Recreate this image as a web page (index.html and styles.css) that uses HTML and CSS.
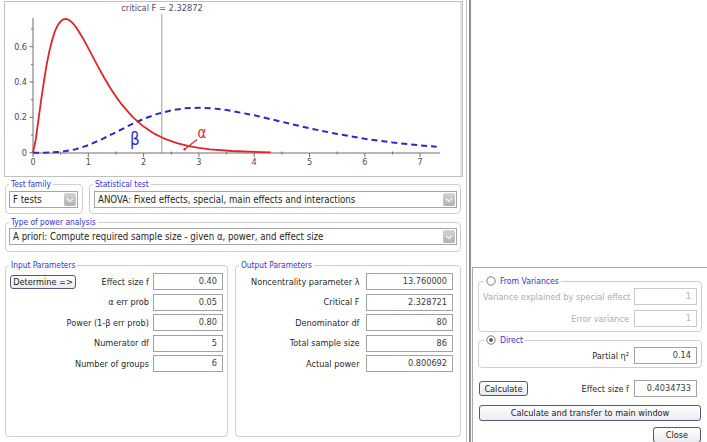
FILE: index.html
```html
<!DOCTYPE html>
<html lang="en">
<head>
    <meta charset="UTF-8">
    <title>G*Power - ANOVA</title>
    <link rel="stylesheet" href="styles.css">
</head>
<body>
<div class="screen">
    <div class="main">
        <div class="chart">
            <svg class="plot" width="457" height="174" viewBox="5 2 457 174">
                <text class="crit-label" x="162" y="11">critical F = 2.32872</text>
                <line class="crit-line" x1="161.8" y1="14" x2="161.8" y2="153"/>
                <path class="axis" d="M33 18V153H440"/>
                <path class="axis" d="M33 153v4M88.3 153v4M143.6 153v4M198.9 153v4M254.2 153v4M309.5 153v4M364.8 153v4M420.1 153v4
                    M60.7 151.5v3M116 151.5v3M171.3 151.5v3M226.6 151.5v3M281.9 151.5v3M337.2 151.5v3M392.5 151.5v3
                    M29.5 152.7h3.5M29.5 117.4h3.5M29.5 82h3.5M29.5 46.7h3.5M31 135h2M31 99.7h2M31 64.4h2M31 29h2"/>
                <g class="tick-x">
                    <text x="33" y="165">0</text>
                    <text x="88.3" y="165">1</text>
                    <text x="143.6" y="165">2</text>
                    <text x="198.9" y="165">3</text>
                    <text x="254.2" y="165">4</text>
                    <text x="309.5" y="165">5</text>
                    <text x="364.8" y="165">6</text>
                    <text x="420.1" y="165">7</text>
                </g>
                <g class="tick-y">
                    <text x="27" y="155.7">0</text>
                    <text x="27" y="120.4">0.2</text>
                    <text x="27" y="85">0.4</text>
                    <text x="27" y="49.7">0.6</text>
                </g>
                <polyline class="curve-blue" points="33,152.7 46.8,152.6 60.7,151.9 74.5,149.6 88.3,145.2 102.1,139.1 116,132.2 129.8,125.2 143.6,118.9 157.4,113.9 171.3,110.3 185.1,108.3 198.9,107.7 212.7,108.4 226.6,110 254.2,115.3 281.9,121.8 309.5,128.3 337.2,134 364.8,138.8 392.5,142.5 420.1,145.4 436.7,146.8"/>
                <polyline class="curve-red" points="33,152.7 35.8,139.2 38.5,119.3 41.3,99 44.1,80.1 46.8,63.7 49.6,50.1 52.4,39.2 55.1,30.8 57.9,24.9 60.7,21.2 63.4,19.3 66.2,18.9 69,20 71.7,22.1 74.5,25.2 77.2,28.9 82.8,37.9 88.3,48.1 93.8,58.6 99.4,69.1 104.9,79 110.4,88.2 116,96.6 121.5,104.2 132.5,116.9 143.6,126.6 154.7,133.9 165.7,139.2 176.8,143.1 187.8,145.9 198.9,147.9 210,149.3 232.1,151 254.2,151.9 270.8,152.4"/>
                <text class="beta" x="135" y="145">β</text>
                <text class="alpha" x="202" y="138">α</text>
                <line class="pointer" x1="197" y1="139.5" x2="185" y2="149"/>
                <circle class="pointer-dot" cx="184.6" cy="149.3" r="1.2"/>
            </svg>
        </div>

        <div class="test-row">
            <fieldset class="group family">
                <legend>Test family</legend>
                <div class="select">
                    <span class="select-value">F tests</span>
                    <span class="select-arrow"><svg width="8" height="6" viewBox="0 0 8 6"><polyline points="1,1.5 4,4.5 7,1.5"/></svg></span>
                </div>
            </fieldset>
            <fieldset class="group stat">
                <legend>Statistical test</legend>
                <div class="select">
                    <span class="select-value">ANOVA: Fixed effects, special, main effects and interactions</span>
                    <span class="select-arrow"><svg width="8" height="6" viewBox="0 0 8 6"><polyline points="1,1.5 4,4.5 7,1.5"/></svg></span>
                </div>
            </fieldset>
        </div>

        <fieldset class="group power-type">
            <legend>Type of power analysis</legend>
            <div class="select">
                <span class="select-value">A priori: Compute required sample size - given α, power, and effect size</span>
                <span class="select-arrow"><svg width="8" height="6" viewBox="0 0 8 6"><polyline points="1,1.5 4,4.5 7,1.5"/></svg></span>
            </div>
        </fieldset>

        <div class="params">
            <fieldset class="group input-params">
                <legend>Input Parameters</legend>
                <div class="param-list">
                    <div class="param-row">
                        <button class="btn determine">Determine =&gt;</button>
                        <span class="label">Effect size f</span>
                        <span class="field">0.40</span>
                    </div>
                    <div class="param-row">
                        <span class="label">α err prob</span>
                        <span class="field">0.05</span>
                    </div>
                    <div class="param-row">
                        <span class="label">Power (1-β err prob)</span>
                        <span class="field">0.80</span>
                    </div>
                    <div class="param-row">
                        <span class="label">Numerator df</span>
                        <span class="field">5</span>
                    </div>
                    <div class="param-row">
                        <span class="label">Number of groups</span>
                        <span class="field">6</span>
                    </div>
                </div>
            </fieldset>
            <fieldset class="group output-params">
                <legend>Output Parameters</legend>
                <div class="param-list">
                    <div class="param-row">
                        <span class="label">Noncentrality parameter λ</span>
                        <span class="field">13.760000</span>
                    </div>
                    <div class="param-row">
                        <span class="label">Critical F</span>
                        <span class="field">2.328721</span>
                    </div>
                    <div class="param-row">
                        <span class="label">Denominator df</span>
                        <span class="field">80</span>
                    </div>
                    <div class="param-row">
                        <span class="label">Total sample size</span>
                        <span class="field">86</span>
                    </div>
                    <div class="param-row">
                        <span class="label">Actual power</span>
                        <span class="field">0.800692</span>
                    </div>
                </div>
            </fieldset>
        </div>
    </div>

    <div class="side">
        <div class="dialog">
            <fieldset class="group variances">
                <legend>
                    <span class="radio-title">
                        <svg class="radio" width="10" height="10" viewBox="0 0 10 10"><circle cx="5" cy="5" r="4.2"/></svg>
                        From Variances
                    </span>
                </legend>
                <div class="var-rows">
                    <div class="var-row">
                        <span class="label muted">Variance explained by special effect</span>
                        <span class="field disabled">1</span>
                    </div>
                    <div class="var-row">
                        <span class="label muted">Error variance</span>
                        <span class="field disabled">1</span>
                    </div>
                </div>
            </fieldset>
            <fieldset class="group direct">
                <legend>
                    <span class="radio-title">
                        <svg class="radio checked" width="10" height="10" viewBox="0 0 10 10"><circle cx="5" cy="5" r="4.2"/><circle class="dot" cx="5" cy="5" r="2"/></svg>
                        Direct
                    </span>
                </legend>
                <div class="var-row">
                    <span class="label">Partial η²</span>
                    <span class="field">0.14</span>
                </div>
            </fieldset>
            <div class="calc-row">
                <button class="btn">Calculate</button>
                <span class="label">Effect size f</span>
                <span class="field">0.4034733</span>
            </div>
            <button class="btn transfer">Calculate and transfer to main window</button>
            <button class="btn close">Close</button>
        </div>
    </div>
</div>
</body>
</html>
```

FILE: styles.css
```css
* {
    box-sizing: border-box;
}

body {
    margin: 0;
    background-color: #ffffff;
    font-family: "DejaVu Sans Condensed", "DejaVu Sans", sans-serif;
    font-stretch: condensed;
    font-size: 9.1px;
    color: #2a2a2a;
}

.screen {
    display: flex;
    width: 707px;
    height: 442px;
    overflow: hidden;
}

/* main window */
.main {
    display: flex;
    flex-direction: column;
    flex-shrink: 0;
    width: 467px;
    height: 442px;
    padding: 0 5px;
    border-right: 1px solid #c4c4c4;
}

.chart {
    height: 176px;
    margin: 1px -2px 0 -1px;
    border: 1px solid #c2c2c2;
    box-shadow: inset -2px 0 0 #e4e4e4;
}

.plot {
    display: block;
}

.plot text {
    font-family: "DejaVu Sans Condensed", "DejaVu Sans", sans-serif;
    font-stretch: condensed;
}

.crit-label {
    font-size: 9.2px;
    fill: #534a66;
    text-anchor: middle;
}

.crit-line {
    stroke: #9c9c9c;
    stroke-width: 1;
}

.axis {
    fill: none;
    stroke: #6f6f6f;
    stroke-width: 1;
}

.tick-x text,
.tick-y text {
    font-size: 9px;
    fill: #4c4658;
}

.tick-x text {
    text-anchor: middle;
}

.tick-y text {
    text-anchor: end;
}

.curve-red {
    fill: none;
    stroke: #e32424;
    stroke-width: 1.8;
    stroke-linejoin: round;
}

.curve-blue {
    fill: none;
    stroke: #2a2ac6;
    stroke-width: 2;
    stroke-dasharray: 6 4;
}

.beta {
    font-size: 17px;
    fill: #2d2dcc;
    text-anchor: middle;
}

.alpha {
    font-size: 15px;
    fill: #e22a2a;
    text-anchor: middle;
}

.pointer {
    stroke: #e22a2a;
    stroke-width: 1.3;
}

.pointer-dot {
    fill: #e22a2a;
}

/* grouped boxes */
.group {
    margin: 0;
    padding: 0 3px 5px;
    min-width: 0;
    border: 1px solid #cfcfcf;
    border-radius: 4px;
}

.group legend {
    padding: 0 2px;
    font-size: 8.3px;
    line-height: 12px;
    color: #3434d4;
}

.test-row {
    display: flex;
    gap: 6px;
    margin-top: 1px;
}

.family {
    flex-shrink: 0;
    width: 78px;
    padding: 1px 4px 5px 3px;
}

.stat {
    flex: 1;
    padding: 1px 3px 5px 4px;
}

.stat legend {
    margin-left: -1px;
}

.power-type {
    margin-top: 2px;
    padding: 0 3px 6px 3px;
}

.select {
    display: flex;
    align-items: center;
    height: 17px;
    padding: 0 1px 0 3px;
    border: 1px solid #a5a5a5;
    background-color: #ffffff;
}

.select-value {
    flex: 1;
    overflow: hidden;
    white-space: nowrap;
    font-size: 9.6px;
    color: #262626;
}

.select-arrow {
    display: flex;
    align-items: center;
    justify-content: center;
    width: 12px;
    height: 13px;
    border-radius: 2px;
    background: linear-gradient(#d4d4d4, #b2b2b2);
}

.select-arrow polyline {
    fill: none;
    stroke: #eeeeee;
    stroke-width: 1.5;
}

/* parameter boxes */
.params {
    flex: 1;
    display: flex;
    gap: 7px;
    margin: 7px 0 5px;
}

.params .group {
    flex: 1 1 0;
}

.input-params {
    padding: 2px 4px 0 4px;
}

.output-params {
    padding: 2px 7px 0 4px;
}

.params legend {
    margin-left: -1px;
}

.param-list {
    display: flex;
    flex-direction: column;
    gap: 3.5px;
}

.param-row {
    display: grid;
    align-items: center;
    height: 17px;
}

.input-params .param-row {
    grid-template-columns: 66px minmax(0, 1fr) 70px;
    column-gap: 4px;
}

.input-params .label {
    grid-column: 1 / 3;
}

.input-params .btn + .label {
    grid-column: 2;
}

.input-params .field {
    grid-column: 3;
}

.output-params .param-row {
    grid-template-columns: minmax(0, 1fr) 87px;
    column-gap: 6.5px;
}

.label {
    text-align: right;
    white-space: nowrap;
}

.field {
    height: 17px;
    padding-right: 5px;
    border: 1px solid #a2a2a2;
    background-color: #ffffff;
    text-align: right;
    line-height: 15px;
    color: #3a3a3a;
    white-space: nowrap;
}

.field.disabled {
    border-color: #c9c9c9;
    color: #b5b5b5;
}

.muted {
    color: #adadad;
}

.btn {
    height: 14px;
    padding: 0;
    border: 1px solid #55557f;
    border-radius: 3px;
    background: linear-gradient(#ffffff, #ebebf1);
    font: inherit;
    line-height: 12px;
    color: #222222;
    white-space: nowrap;
}

.determine {
    width: 66px;
}

/* effect size dialog */
.side {
    flex: 1;
    display: flex;
    margin-left: 2px;
    border-left: 2px solid #8d8d8d;
}

.dialog {
    flex: 1;
    display: flex;
    flex-direction: column;
    margin: 267px 0 0 1px;
    padding: 7px 5px 0;
    border-top: 1px solid #a9a9a9;
    border-left: 1px solid #a9a9a9;
}

.dialog > * {
    flex-shrink: 0;
}

.dialog .group {
    padding: 1px 4px 4px;
}

.dialog legend {
    margin-left: 1px;
    font-size: 8.6px;
}

.radio-title {
    display: flex;
    align-items: center;
    gap: 4px;
    height: 12px;
}

.radio {
    display: block;
}

.radio circle {
    fill: #ffffff;
    stroke: #7a7a7a;
    stroke-width: 1;
}

.radio .dot {
    fill: #4f6b4f;
    stroke: none;
}

.var-rows {
    display: flex;
    flex-direction: column;
    gap: 5px;
}

.var-row {
    display: grid;
    grid-template-columns: minmax(0, 1fr) 63px;
    column-gap: 5px;
    align-items: center;
    height: 17px;
}

.dialog .direct {
    margin-top: 2px;
    padding: 1px 4px 3px;
}

.calc-row {
    display: grid;
    grid-template-columns: 49px minmax(0, 1fr) 63px;
    column-gap: 5px;
    align-items: center;
    height: 17px;
    margin-top: 12px;
    padding: 0 5px 0 1px;
}

.calc-row .btn {
    height: 15px;
}

.transfer {
    height: 16px;
    margin: 8px 1px 0;
}

.close {
    align-self: flex-end;
    width: 48px;
    height: 16px;
    margin: 6px 1px 0 0;
}
```
